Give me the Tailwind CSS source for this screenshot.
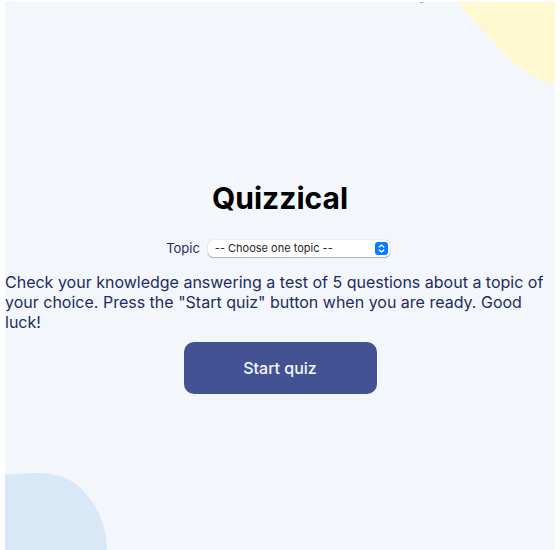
<!DOCTYPE html>
<html lang="en">
<head>
<meta charset="utf-8">
<meta name="viewport" content="width=device-width, initial-scale=1">
<title>Quizzical</title>
<script src="https://cdn.jsdelivr.net/npm/@tailwindcss/browser@4"></script>
</head>
<body class="min-h-screen bg-white px-[5px] pt-0.5 flex flex-col font-['Inter',sans-serif]">
<main class="relative grow overflow-hidden bg-[#f3f6fb] flex flex-col items-center justify-center pt-5 text-[#232c5e]">
  <svg class="absolute top-0 right-0" width="97" height="82" viewBox="0 0 97 82" aria-hidden="true"><path d="M0 0C10 14 22 25 35 39C56 63 75 79 97 82V0Z" fill="#fff8d1"/></svg>
  <svg class="absolute bottom-0 left-0" width="102" height="77" viewBox="0 0 102 77" aria-hidden="true"><path d="M0 2C32-1 51-2 69 10C89 24 102 51 102 77H0Z" fill="#d9e8f7"/></svg>
  <span class="absolute top-0 left-[415px] w-[3px] h-px bg-[#a5a8b0]" aria-hidden="true"></span>
  <h1 class="text-[30px] leading-10 font-bold text-black">Quizzical</h1>
  <div class="mt-5 pr-1 flex items-center gap-2 leading-5">
    <label for="topic" class="text-[13px]">Topic</label>
    <div class="relative flex">
      <select id="topic" class="appearance-none w-[182px] h-[17px] rounded-[5px] bg-white pl-[7px] pr-5 text-[11px] leading-4 text-[#262626] shadow-[0_0_1px_rgba(0,0,0,0.35),0_1px_1px_rgba(0,0,0,0.25)]">
        <option>-- Choose one topic --</option>
      </select>
      <svg class="pointer-events-none absolute right-0.5 top-0.5" width="13" height="13" viewBox="0 0 13 13" fill="none" aria-hidden="true"><rect width="13" height="13" rx="3" fill="#087bff"/><path d="M4.2 5L6.5 2.9L8.8 5M4.2 8L6.5 10.1L8.8 8" stroke="white" stroke-width="1.3" stroke-linecap="round" stroke-linejoin="round"/></svg>
    </div>
  </div>
  <p class="mt-3.5 w-full text-base leading-5">Check your knowledge answering a test of 5 questions about a topic of your choice. Press the "Start quiz" button when you are ready. Good luck!</p>
  <button type="button" class="mt-2.5 w-[193px] h-[52px] rounded-[10px] bg-[#435292] text-base font-medium text-[#f5f7fb]">Start quiz</button>
</main>
</body>
</html>
